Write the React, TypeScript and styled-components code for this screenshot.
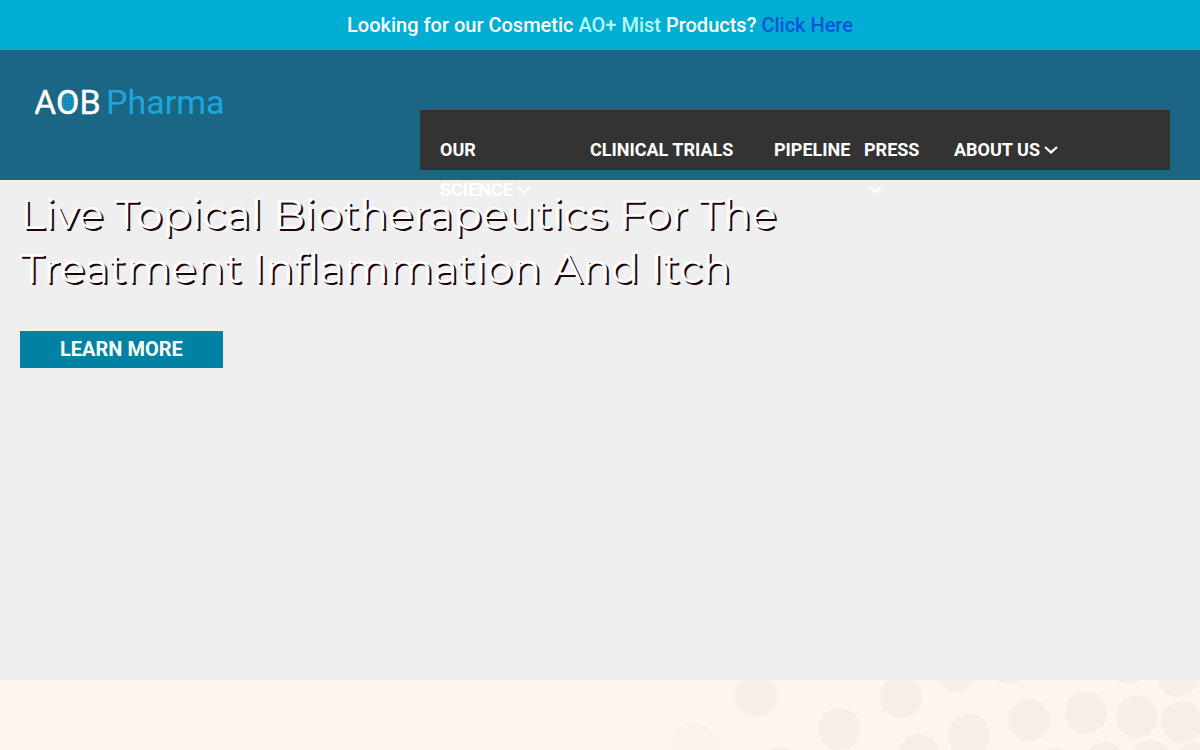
import React from "react";
import styled, { createGlobalStyle } from "styled-components";

const GlobalStyle = createGlobalStyle`
  *, *::before, *::after { box-sizing: border-box; }
  body {
    margin: 0;
    background: #fdf5ee;
    font-family: Roboto, "Liberation Sans", sans-serif;
    color: #ffffff;
  }
`;

const Banner = styled.p`
  margin: 0;
  background: #00aed3;
  font-size: 20px;
  font-weight: 500;
  line-height: 50px;
  text-align: center;
`;

const Product = styled.span`
  color: #b2fbff;
`;

const BannerLink = styled.a`
  color: #0555d8;
  text-decoration: none;
`;

const Header = styled.header`
  position: relative;
  z-index: 1;
  display: flex;
  align-items: flex-start;
  justify-content: space-between;
  height: 130px;
  padding: 0 30px 0 35px;
  background: #1b6685;
`;

const Logo = styled.a`
  display: block;
  padding-top: 30px;
  line-height: 0;
`;

const Nav = styled.nav`
  flex: 0 1 750px;
  margin-top: 60px;
  background: #333333;
  border-radius: 1px;
`;

const Menu = styled.ul`
  display: flex;
  height: 60px;
  margin: 0;
  padding: 20px 0 0;
  list-style: none;
`;

const MenuItem = styled.li<{ $width: number }>`
  flex: none;
  width: ${({ $width }) => $width}px;
  padding: 0 20px;
`;

const MenuLink = styled.a<{ $wrap?: boolean }>`
  display: block;
  color: #ffffff;
  font-size: 18px;
  font-weight: 700;
  line-height: 40px;
  text-decoration: none;
  white-space: ${({ $wrap }) => ($wrap ? "normal" : "nowrap")};
`;

const ChevronIcon = styled.svg`
  display: inline-block;
  width: 14px;
  height: 8px;
  margin-left: 4px;
  vertical-align: 2px;
`;

const Hero = styled.section`
  min-height: 500px;
  padding: 7px 20px;
  background: #efefef;
`;

const Title = styled.h1`
  max-width: 800px;
  margin: 0 0 36px;
  font-family: Montserrat, Inter, sans-serif;
  font-size: 42px;
  font-weight: 400;
  line-height: 54px;
  text-shadow: 2px 2px 0 #200008;
`;

const HeroButton = styled.button`
  height: 37px;
  padding: 0 40px;
  border: 0;
  background: #0082a5;
  color: #ffffff;
  font-family: inherit;
  font-size: 20px;
  font-weight: 700;
  line-height: 37px;
`;

const Intro = styled.section`
  display: flex;
  justify-content: flex-end;
  background: #fdf5ee;
`;

const Dots = styled.svg`
  display: block;
  width: 540px;
  height: 70px;
`;

const dots: [number, number][] = [
  [96, 16], [179, 49], [241, 17], [259, 75], [120, 88], [296, -9], [349, -17],
  [469, -17], [518, -4], [369, 40], [426, 33], [477, 37], [522, 42],
  [309, 55], [445, 83], [491, 81], [535, 84], [397, 89],
];

const menu = [
  { label: "OUR SCIENCE", width: 150, sub: true, wrap: true },
  { label: "CLINICAL TRIALS", width: 184 },
  { label: "PIPELINE", width: 90 },
  { label: "PRESS", width: 90, sub: true, wrap: true },
  { label: "ABOUT US", width: 145, sub: true },
];

function Chevron() {
  return (
    <ChevronIcon viewBox="0 0 14 8" aria-hidden="true">
      <path d="M1 1L7 6.4L13 1" fill="none" stroke="#ffffff" strokeWidth="2.2" />
    </ChevronIcon>
  );
}

export default function App() {
  return (
    <>
      <GlobalStyle />
      <Banner>
        Looking for our Cosmetic <Product>AO+ Mist</Product> Products?{" "}
        <BannerLink href="#products">Click Here</BannerLink>
      </Banner>
      <Header>
        <Logo href="#home" aria-label="AOB Pharma">
          <svg width="192" height="42" viewBox="0 0 192 42" fontFamily="Roboto, sans-serif">
            <defs>
              <pattern id="globe" width="3" height="3" patternUnits="userSpaceOnUse">
                <rect width="3" height="3" fill="#1c94c2" />
                <path d="M0 0H3M0 0V3" stroke="#16749c" strokeWidth="1" />
              </pattern>
            </defs>
            <ellipse cx="33" cy="22" rx="9" ry="11" fill="url(#globe)" />
            <text x="-1" y="34" fontSize="34" fill="#ffffff" stroke="#ffffff" strokeWidth="0.4">AOB</text>
            <text x="71" y="34" fontSize="34" fill="#1ba6dc">Pharma</text>
          </svg>
        </Logo>
        <Nav aria-label="Main">
          <Menu>
            {menu.map(({ label, width, sub, wrap }) => (
              <MenuItem key={label} $width={width}>
                <MenuLink href="#" $wrap={wrap}>
                  {label}
                  {sub && <Chevron />}
                </MenuLink>
              </MenuItem>
            ))}
          </Menu>
        </Nav>
      </Header>
      <main>
        <Hero>
          <Title>Live Topical Biotherapeutics For The Treatment Inflammation And Itch</Title>
          <HeroButton type="button">LEARN MORE</HeroButton>
        </Hero>
        <Intro>
          <Dots viewBox="0 0 540 70" aria-hidden="true">
            <circle cx="33" cy="63" r="21" fill="#fbf2ec" />
            {dots.map(([x, y]) => (
              <circle key={`${x},${y}`} cx={x} cy={y} r="21" fill="#f6eee9" />
            ))}
          </Dots>
        </Intro>
      </main>
    </>
  );
}
